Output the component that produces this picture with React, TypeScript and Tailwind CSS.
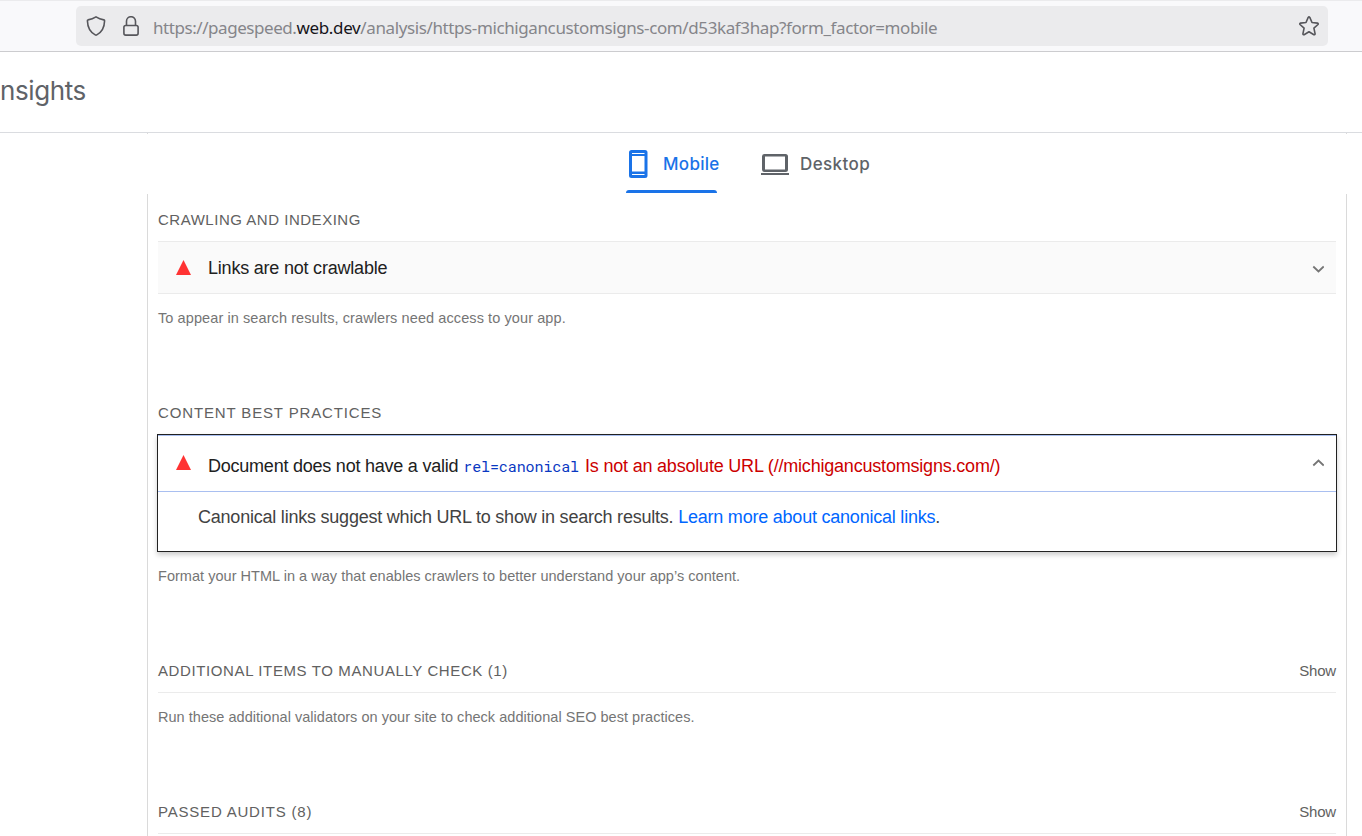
import React from "react";

const arial = "font-['Liberation_Sans',Arial,sans-serif]";

function Chevron({ up = false }: { up?: boolean }) {
  return (
    <svg className="h-3 w-3 shrink-0" viewBox="0 0 12 12" fill="none" stroke="#757575" strokeWidth="1.8">
      <path d={up ? "M1.300 7.500 6.500 2.500l5.200 5" : "M1.300 4.500 6.500 9.500l5.200-5"} />
    </svg>
  );
}

function FailMark() {
  return (
    <svg className="h-[15px] w-[15px] shrink-0" viewBox="0 0 15 15">
      <path d="M7.500 0 15 15H0Z" fill="#f33" />
    </svg>
  );
}

function AddressBar() {
  return (
    <div className="h-[52px] border-t border-b border-t-[#ebebed] border-b-[#cccccf] bg-[#f9f9fb] pt-[5px] pr-[34px] pl-[76px]">
      <div className="flex h-10 items-center rounded-[5px] bg-[#ebebed] pr-[9px] pl-[10px]">
        <svg className="h-5 w-5 shrink-0" viewBox="0 0 20 20" fill="none" stroke="#56565b" strokeWidth="1.6" strokeLinejoin="round">
          <path d="M10 .9Q6.500 3.200 2 3.900q-.6.2-.6.9c.2 6.800 2.700 11.400 7.800 14.100q.8.4 1.600 0c5.100-2.700 7.600-7.300 7.800-14.100 0-.7-.2-.8-.8-.9Q13.500 3.200 10 .9Z" />
        </svg>
        <svg className="ml-[17px] h-5 w-4 shrink-0" viewBox="0 0 16 20" fill="none" stroke="#56565b" strokeWidth="1.6">
          <path d="M3.500 9.500V5.200a4.500 4.500 0 0 1 9 0v4.300" />
          <rect x=".9" y="9.500" width="14.200" height="9.600" rx="1.800" />
        </svg>
        <span className="mt-[3px] ml-[14px] font-['Noto_Sans',sans-serif] text-[17px] leading-6 tracking-[-0.39px] whitespace-nowrap text-[#85858a]">
          <span className="tracking-[-0.44px]">https://pagespeed.</span><span className="tracking-[-0.35px] text-[#15141a]">web.dev</span>/analysis/https-michigancustomsigns-com/d53kaf3hap?form_factor=mobile
        </span>
        <svg className="ml-auto h-5 w-5 shrink-0" viewBox="0 0 20 20" fill="none" stroke="#56565b" strokeWidth="1.6" strokeLinejoin="round">
          <path d="M9.200 1.400q.8-1 1.600 0l2.200 5.100 5.500.6q1.200.4.5 1.400l-4.100 3.700 1.200 5.700q-.1 1.100-1.200.8L10 15.800l-4.900 2.900q-1.100.3-1.200-.8l1.200-5.700L1 8.500q-.7-1 .5-1.400L7 6.500Z" />
        </svg>
      </div>
    </div>
  );
}

function Tabs() {
  return (
    <nav className="-mt-px flex h-[61px]">
      <div className="ml-[626px] flex h-[60px] w-[91px] flex-col">
        <div className="flex h-[57px] items-center pt-[5px] pl-[3px]">
          <svg className="h-7 w-[19px] shrink-0" viewBox="0 0 19 28" fill="#1a73e8">
            <path fillRule="evenodd" d="M2.500 0h13.500a2.500 2.500 0 0 1 2.500 2.500v23a2.500 2.500 0 0 1-2.500 2.500H2.500A2.500 2.500 0 0 1 0 25.500v-23A2.500 2.500 0 0 1 2.500 0ZM3 3v1h12.500V3ZM3 6v15.500h12.500V6ZM3 24v1h12.500v-1Z" />
          </svg>
          <span className="ml-[15px] font-['Inter',sans-serif] text-[17px] leading-6 font-medium tracking-[0.3px] text-[#1a73e8]">Mobile</span>
        </div>
        <div className="h-[3px] w-[91px] rounded-t-[3px] bg-[#1a73e8]" />
      </div>
      <div className="ml-11 flex h-[57px] items-center pt-[5px]">
        <svg className="mt-[2px] h-[22px] w-7 shrink-0" viewBox="0 0 28 22" fill="#5f6368">
          <path fillRule="evenodd" d="M3.500 0h21A2.500 2.500 0 0 1 27 2.500v13a2.500 2.500 0 0 1-2.500 2.500h-21A2.500 2.500 0 0 1 1 15.500v-13A2.500 2.500 0 0 1 3.500 0ZM4 2.500v13h20v-13ZM0 19h28v2H0Z" />
        </svg>
        <span className="ml-[11px] font-['Inter',sans-serif] text-[17px] leading-6 font-medium tracking-[0.4px] text-[#5f6368]">Desktop</span>
      </div>
    </nav>
  );
}

function Heading({ children, tracking }: { children: React.ReactNode; tracking: string }) {
  return <h2 className={`text-[15px] leading-5 whitespace-nowrap text-[#616161] uppercase ${tracking}`}>{children}</h2>;
}

function Description({ children, tracking }: { children: React.ReactNode; tracking: string }) {
  return <p className={`text-[14.5px] leading-5 whitespace-nowrap text-[#757575] ${tracking}`}>{children}</p>;
}

export default function App() {
  return (
    <div className={`flex h-[836px] w-[1362px] flex-col overflow-hidden bg-white ${arial}`}>
      <AddressBar />
      <header className="h-[81px] border-b border-[#dadce0] pt-[23px]">
        <div className="font-['Inter',sans-serif] text-[26px] leading-8 tracking-[-0.4px] text-[#5f6368]">nsights</div>
      </header>
      <div className="ml-[147px] h-px w-[1200px] border-x border-[#dadada]" />
      <Tabs />
      <main className="ml-[147px] w-[1200px] flex-1 border-x border-[#dadada] pr-[10px] pl-[10px]">
        <div className="pt-[16px]"><Heading tracking="tracking-[0.52px]">Crawling and indexing</Heading></div>
        <div className="mt-[11px] flex h-[53px] items-center border-y border-[#ebebeb] bg-[#fafafa] pr-3 pl-[18px]">
          <FailMark />
          <span className="mr-auto ml-[17px] text-[18px] leading-6 tracking-[-0.21px] text-[#212121]">Links are not crawlable</span>
          <Chevron />
        </div>
        <div className="mt-[14px]"><Description tracking="tracking-[0.09px]">To appear in search results, crawlers need access to your app.</Description></div>

        <div className="mt-[75px]"><Heading tracking="tracking-[0.86px]">Content best practices</Heading></div>
        <section className="-mx-px mt-[11px] h-[118px] border border-[#212121] shadow-[0_3px_5px_rgba(0,0,0,0.2)]">
          <div className="flex h-[57px] items-center border-t border-b border-t-[#a9bff0] border-b-[#a9bff0] pr-3 pl-[18px]">
            <div className="pb-[2px]"><FailMark /></div>
            <div className="mt-[4px] mr-auto ml-[17px] flex items-baseline text-[18px] leading-6 tracking-[-0.23px] whitespace-nowrap text-[#212121]">
              <span>Document does not have a valid</span>
              <code className="ml-[5px] font-['Roboto_Mono','Liberation_Mono',monospace] text-[15px] tracking-[-0.1px] text-[#0938c2]">rel=canonical</code>
              <span className="ml-[6px] tracking-[-0.2px] text-[#c00]">Is not an absolute URL (//michigancustomsigns.com/)</span>
            </div>
            <Chevron up />
          </div>
          <p className="mt-[13px] pl-10 text-[18px] leading-6 tracking-[-0.22px] whitespace-nowrap text-[#424242]">
            Canonical links suggest which URL to show in search results. <a className="text-[#06f]">Learn more about canonical links</a>.
          </p>
        </section>
        <div className="mt-[14px]"><Description tracking="tracking-[0.03px]">Format your HTML in a way that enables crawlers to better understand your app’s content.</Description></div>

        <div className="mt-[75px] flex h-[32px] justify-between border-b border-[#ebebeb]">
          <Heading tracking="tracking-[0.61px]">Additional items to manually check (1)</Heading>
          <span className="text-[15px] leading-5 tracking-[-0.2px] text-[#616161]">Show</span>
        </div>
        <div className="mt-[14px]"><Description tracking="tracking-[0.035px]">Run these additional validators on your site to check additional SEO best practices.</Description></div>

        <div className="mt-[75px] flex h-[32px] justify-between border-b border-[#ebebeb]">
          <Heading tracking="tracking-[0.8px]">Passed audits (8)</Heading>
          <span className="text-[15px] leading-5 tracking-[-0.2px] text-[#616161]">Show</span>
        </div>
      </main>
    </div>
  );
}
